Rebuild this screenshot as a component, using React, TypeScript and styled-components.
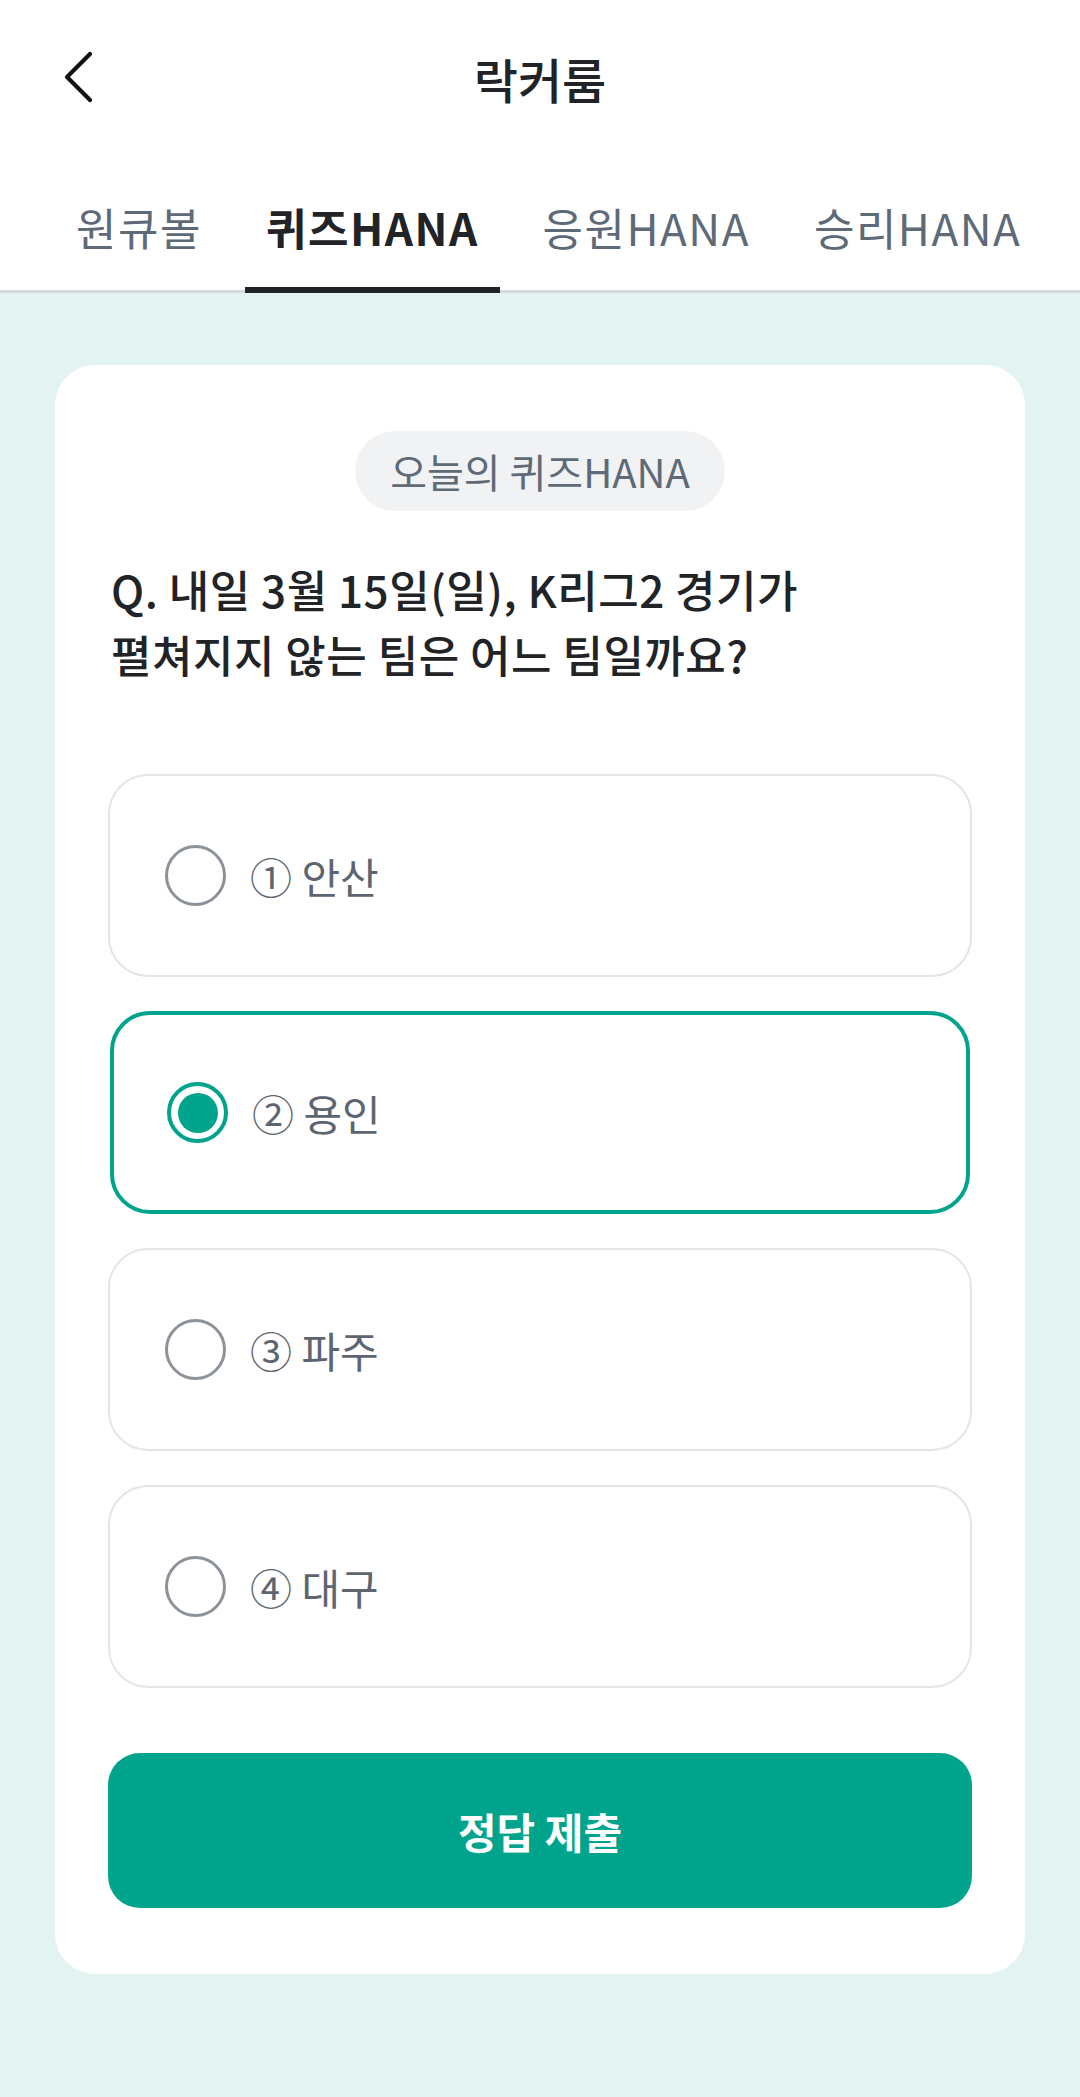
import { useState } from 'react'
import styled, { createGlobalStyle } from 'styled-components'

const GlobalStyle = createGlobalStyle`
    body {
        margin: 0;
        background: #E3F3F1;
        font-family: "Noto Sans CJK KR", "Noto Sans", sans-serif;
    }
    * {
        box-sizing: border-box;
    }
`

const Page = styled.div`
    min-height: 100vh;
    background: #E3F3F1;
`

const Header = styled.header`
    background: #FFFFFF;
`

const TopBar = styled.div`
    height: 156px;
    display: grid;
    grid-template-columns: 1fr auto 1fr;
    align-items: center;
    padding: 0 62px;
`

const BackButton = styled.button`
    width: 44px;
    height: 56px;
    padding: 0;
    border: none;
    background: none;
    display: flex;
    align-items: center;
    justify-content: flex-start;
    cursor: pointer;
`

const Title = styled.h1`
    margin: 0;
    font-size: 48px;
    line-height: 60px;
    font-weight: 500;
    color: #222326;
`

const TabBar = styled.nav`
    display: flex;
    gap: 22px;
    padding-left: 55px;
    border-bottom: 3px solid #D6DADD;
`

const Tab = styled.button<{ $active: boolean }>`
    padding: 45px 21px 34px;
    margin-bottom: -3px;
    border: none;
    border-bottom: 6px solid ${({ $active }) => ($active ? '#222326' : 'transparent')};
    background: none;
    font-family: inherit;
    font-size: 44px;
    line-height: 52px;
    letter-spacing: 1.5px;
    font-weight: ${({ $active }) => ($active ? 700 : 400)};
    color: ${({ $active }) => ($active ? '#222326' : '#5E6A77')};
    white-space: nowrap;
    cursor: pointer;
`

const Content = styled.main`
    padding: 72px 55px;
`

const Card = styled.section`
    background: #FFFFFF;
    border-radius: 40px;
    padding: 66px 53px;
    display: flex;
    flex-direction: column;
`

const Badge = styled.div`
    align-self: center;
    height: 80px;
    padding: 0 35px;
    border-radius: 40px;
    background: #F0F2F4;
    display: flex;
    align-items: center;
    font-size: 40px;
    color: #5E6A77;
`

const Question = styled.p`
    margin: 46px 0 0;
    padding-left: 3px;
    font-size: 44px;
    line-height: 65px;
    letter-spacing: 0.5px;
    font-weight: 500;
    color: #222326;
`

const OptionList = styled.div`
    margin-top: 87px;
    display: flex;
    flex-direction: column;
    gap: 34px;
`

const Option = styled.label<{ $selected: boolean }>`
    height: 203px;
    border-radius: 40px;
    border: ${({ $selected }) => ($selected ? '4px solid #00A48C' : '2px solid #E3E5E8')};
    padding-left: ${({ $selected }) => ($selected ? '53px' : '55px')};
    margin: ${({ $selected }) => ($selected ? '0 2px' : '0')};
    display: flex;
    align-items: center;
    gap: 24px;
    cursor: pointer;
`

const Radio = styled.span<{ $checked: boolean }>`
    width: 61px;
    height: 61px;
    border-radius: 50%;
    border: ${({ $checked }) => ($checked ? '4px solid #00A48C' : '3px solid #8C9299')};
    display: flex;
    align-items: center;
    justify-content: center;
    flex-shrink: 0;

    &::after {
        content: '';
        width: 40px;
        height: 40px;
        border-radius: 50%;
        background: ${({ $checked }) => ($checked ? '#00A48C' : 'transparent')};
    }
`

const OptionText = styled.span`
    font-size: 42px;
    line-height: 56px;
    color: #5D6670;
`

const SubmitButton = styled.button`
    margin-top: 65px;
    height: 155px;
    border: none;
    border-radius: 32px;
    background: #00A48C;
    color: #FFFFFF;
    font-family: inherit;
    font-size: 42px;
    font-weight: 700;
    cursor: pointer;
`

const tabs = ['원큐볼', '퀴즈HANA', '응원HANA', '승리HANA']
const options = ['① 안산', '② 용인', '③ 파주', '④ 대구']

const App = () => {
    const [tab, setTab] = useState(1)
    const [picked, setPicked] = useState(1)
    return (
        <Page>
            <GlobalStyle />
            <Header>
                <TopBar>
                    <BackButton aria-label="뒤로">
                        <svg width="34" height="54" viewBox="0 0 34 54" fill="none">
                            <path d="M28 3 L5 26 L28 49" stroke="#111" strokeWidth="4.2" strokeLinecap="round" strokeLinejoin="round" />
                        </svg>
                    </BackButton>
                    <Title>락커룸</Title>
                </TopBar>
                <TabBar>
                    {tabs.map((t, i) => (
                        <Tab key={t} $active={tab === i} onClick={() => setTab(i)}>{t}</Tab>
                    ))}
                </TabBar>
            </Header>
            <Content>
                <Card>
                    <Badge>오늘의 퀴즈HANA</Badge>
                    <Question>
                        Q. 내일 3월 15일(일), K리그2 경기가<br />
                        펼쳐지지 않는 팀은 어느 팀일까요?
                    </Question>
                    <OptionList>
                        {options.map((o, i) => (
                            <Option key={o} $selected={picked === i} onClick={() => setPicked(i)}>
                                <Radio $checked={picked === i} />
                                <OptionText>{o}</OptionText>
                            </Option>
                        ))}
                    </OptionList>
                    <SubmitButton>정답 제출</SubmitButton>
                </Card>
            </Content>
        </Page>
    )
}

export default App
